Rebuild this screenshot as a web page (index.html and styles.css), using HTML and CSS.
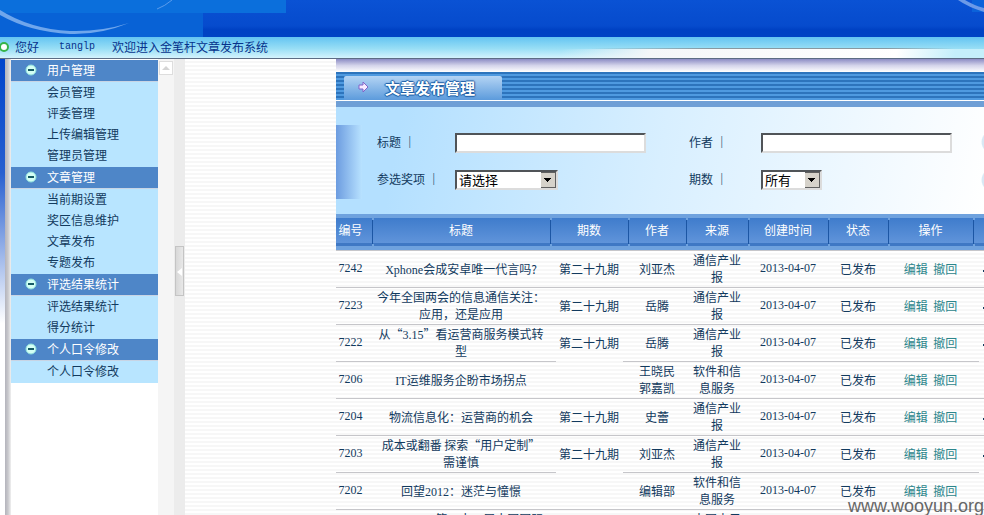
FILE: index.html
```html
<!DOCTYPE html>
<html lang="zh-CN">
<head>
<meta charset="utf-8">
<title>金笔杆文章发布系统</title>
<link rel="stylesheet" href="styles.css">
</head>
<body>
<header class="banner">
  <svg class="swoosh" width="286" height="37" viewBox="0 0 286 37" aria-hidden="true">
    <path fill="#0b6fdc" d="M0 0H286V13H0z"/>
    <path fill="#0862d6" d="M0 13H203V37H0z"/>
    <path fill="#6fa6ec" d="M0 10Q30 29 70 31Q100 32 129 23Q100 35 70 34Q30 32 0 15z"/>
    <path fill="none" stroke="#5b9cec" d="M157 9Q165 6 172 0"/>
  </svg>
  <svg class="swoosh-end" width="30" height="14" viewBox="0 0 30 14" aria-hidden="true">
    <path fill="#0b62da" d="M18 0H30V12H18z"/>
    <path fill="#6c9ae8" d="M4 0H11Q19 5 30 8V12Q14 7 4 0z"/>
  </svg>
</header>
<div class="greeting">
  <span class="ring"></span>
  <span>您好</span>
  <span class="user">tanglp</span>
  <span>欢迎进入金笔杆文章发布系统</span>
</div>
<div class="layout">
  <div class="edge"></div>
  <nav class="menu">
    <section>
      <h2><svg width="12" height="12" viewBox="0 0 12 12"><circle cx="6" cy="6" r="5"/><path d="M3 6H9"/></svg>用户管理</h2>
      <a href="#">会员管理</a><a href="#">评委管理</a><a href="#">上传编辑管理</a><a href="#">管理员管理</a>
    </section>
    <section>
      <h2><svg width="12" height="12" viewBox="0 0 12 12"><circle cx="6" cy="6" r="5"/><path d="M3 6H9"/></svg>文章管理</h2>
      <a href="#">当前期设置</a><a href="#">奖区信息维护</a><a href="#">文章发布</a><a href="#">专题发布</a>
    </section>
    <section>
      <h2><svg width="12" height="12" viewBox="0 0 12 12"><circle cx="6" cy="6" r="5"/><path d="M3 6H9"/></svg>评选结果统计</h2>
      <a href="#">评选结果统计</a><a href="#">得分统计</a>
    </section>
    <section>
      <h2><svg width="12" height="12" viewBox="0 0 12 12"><circle cx="6" cy="6" r="5"/><path d="M3 6H9"/></svg>个人口令修改</h2>
      <a href="#">个人口令修改</a>
    </section>
  </nav>
  <div class="track">
    <button class="scroll-up" aria-label="向上滚动"><svg width="14" height="14" viewBox="0 0 14 14"><path fill="#d4d4d4" d="M3 9L7 5L11 9z"/></svg></button>
  </div>
  <div class="splitter"><button class="handle" aria-label="收起菜单"><svg width="7" height="8" viewBox="0 0 7 8"><path fill="#fff" d="M6 0V8L1 4z"/></svg></button></div>
  <div class="blank"></div>
  <main class="content">
    <div class="shade"></div>
    <div class="titlebar">
      <h1><svg width="12" height="13" viewBox="0 0 12 13"><path fill="#f6eaff" stroke="#8062c8" d="M1 4H5V1L10 6L5 11V8H1z"/></svg>文章发布管理</h1>
    </div>
    <form class="search">
      <label for="title">标题 <b>｜</b></label><input id="title" type="text">
      <label for="author">作者 <b>｜</b></label><input id="author" type="text">
      <label for="award">参选奖项 <b>｜</b></label>
      <span class="pick"><select id="award" class="wide"><option>请选择</option></select></span>
      <label for="issue">期数 <b>｜</b></label>
      <span class="pick"><select id="issue"><option>所有</option></select></span>
    </form>
    <table>
      <colgroup><col class="c-id"><col class="c-title"><col class="c-issue"><col class="c-author"><col class="c-source"><col class="c-date"><col class="c-state"><col class="c-action"><col></colgroup>
      <thead>
        <tr><th>编号</th><th>标题</th><th>期数</th><th>作者</th><th>来源</th><th>创建时间</th><th>状态</th><th>操作</th><th></th></tr>
      </thead>
      <tbody>
        <tr><td>7242</td><td><span class="latin">Xphone</span>会成安卓唯一代言吗?</td><td>第二十九期</td><td>刘亚杰</td><td>通信产业报</td><td>2013-04-07</td><td>已发布</td><td><a href="#">编辑</a> <a href="#">撤回</a></td><td class="more"></td></tr>
        <tr><td>7223</td><td>今年全国两会的信息通信关注：应用，还是应用</td><td>第二十九期</td><td>岳腾</td><td>通信产业报</td><td>2013-04-07</td><td>已发布</td><td><a href="#">编辑</a> <a href="#">撤回</a></td><td class="more"></td></tr>
        <tr><td>7222</td><td>从“<span class="latin">3.15</span>”看运营商服务模式转型</td><td>第二十九期</td><td>岳腾</td><td>通信产业报</td><td>2013-04-07</td><td>已发布</td><td><a href="#">编辑</a> <a href="#">撤回</a></td><td class="more"></td></tr>
        <tr><td>7206</td><td><span class="latin">IT</span>运维服务企盼市场拐点</td><td class="empty"></td><td>王晓民<br>郭嘉凯</td><td>软件和信息服务</td><td>2013-04-07</td><td>已发布</td><td><a href="#">编辑</a> <a href="#">撤回</a></td><td class="empty"></td></tr>
        <tr><td>7204</td><td>物流信息化：运营商的机会</td><td>第二十九期</td><td>史蕾</td><td>通信产业报</td><td>2013-04-07</td><td>已发布</td><td><a href="#">编辑</a> <a href="#">撤回</a></td><td class="more"></td></tr>
        <tr><td>7203</td><td>成本或翻番 探索“用户定制”需谨慎</td><td>第二十九期</td><td>刘亚杰</td><td>通信产业报</td><td>2013-04-07</td><td>已发布</td><td><a href="#">编辑</a> <a href="#">撤回</a></td><td class="more"></td></tr>
        <tr><td>7202</td><td>回望<span class="latin">2012</span>：迷茫与憧憬</td><td class="empty"></td><td>编辑部</td><td>软件和信息服务</td><td>2013-04-07</td><td>已发布</td><td><a href="#">编辑</a> <a href="#">撤回</a></td><td class="empty"></td></tr>
        <tr><td></td><td><span class="latin">CCBN2013</span>第二十一届中国国际广播电视</td><td></td><td></td><td>中国电子报</td><td></td><td></td><td></td><td></td></tr>
      </tbody>
    </table>
  </main>
</div>
<div class="watermark">www.wooyun.org</div>
</body>
</html>
```
FILE: styles.css
```css
* { box-sizing: border-box; }
body {
  margin: 0;
  height: 100vh;
  display: flex;
  flex-direction: column;
  overflow: hidden;
  color: #123a5e;
  font: 12px/18px "Noto Sans CJK SC", sans-serif;
}
h1, h2 { margin: 0; }
a { text-decoration: none; }
button { padding: 0; border: 0; display: block; }

.banner {
  flex: none;
  height: 37px;
  display: flex;
  justify-content: space-between;
  background: linear-gradient(#0a52d4, #064bcd 70%, #0042c4 80%, #0044c4);
}
.greeting {
  flex: none;
  height: 22px;
  display: flex;
  align-items: center;
  padding-bottom: 2px;
  color: #06328c;
  border-bottom: 1px solid #5c6c84;
  background:
    linear-gradient(90deg, #8898a000 60%, #8898a0 72%, #8898a0 90%, #8898a000 97%) 0 11px / 100% 1px no-repeat,
    linear-gradient(100deg, #fff0 57%, #f4f6f8 66%, #fff 91%, #c4effb 97%) 0 12px / 100% 9px no-repeat,
    linear-gradient(#64c4f2, #98def5 55%, #d4f3fd);
}
.ring {
  width: 10px;
  height: 10px;
  margin: 0 6px 0 -1px;
  border: 2px solid #35b44a;
  border-radius: 50%;
  background: #fff;
}
.user {
  margin: 0 17px 0 20px;
  font-family: "Liberation Mono", monospace;
  font-size: 10px;
}

.layout { flex: 1; min-height: 0; display: flex; }
.layout > * { flex: none; }
.edge {
  width: 11px;
  background:
    linear-gradient(90deg, #b4b4bc, #c8c8cc 3px, #f0f0f0) right / 6px 100% no-repeat,
    linear-gradient(#0044cc, #2860d0 25%, #fff 58%);
}
.menu { width: 147px; padding-top: 1px; background: #fff; }
.menu section { padding-bottom: 1px; background: #b8e5ff; }
.menu h2 {
  height: 22px;
  display: flex;
  align-items: center;
  gap: 10px;
  padding: 0 0 2px 14px;
  border-bottom: 1px solid #c8d4e4;
  background: #4e86c8;
  color: #fff;
  font-size: 12px;
  font-weight: 400;
}
.menu h2 circle { fill: #d4fff4; stroke: #8ee0dc; }
.menu h2 path { stroke: #155b66; stroke-width: 2; }
.menu a { display: block; padding: 0 0 2px 36px; line-height: 19px; color: #123a5e; }
.track { width: 16px; background: #f5f5f5; }
.scroll-up { width: 14px; height: 14px; margin: 2px 1px; background: #fff; border: 1px solid #ddd; }
.scroll-up svg { display: block; margin: -1px; }
.splitter { width: 11px; display: flex; align-items: center; background: #ececec; }
.handle {
  width: 9px;
  height: 50px;
  margin: 0 1px 32px;
  border: 1px solid #c4c4c4;
  background: linear-gradient(90deg, #d8d8d8, #e8e8e8);
}
.blank { width: 151px; }
.blank, .content { background: repeating-linear-gradient(#fff 0 2px, #f7f7f7 2px 4px); }

.layout > .content { flex: 1; min-width: 0; overflow: hidden; }
.shade { height: 13px; background: linear-gradient(#8c8cc4, #d4d4ea 50%, #fff); }
.titlebar {
  height: 35px;
  padding: 4px 8px 0;
  background:
    linear-gradient(#fff, #fff) 0 28px / 100% 1px no-repeat,
    linear-gradient(#6f9fd6, #6f9fd6) 0 29px / 100% 6px no-repeat,
    repeating-linear-gradient(#2d74bc 0 2px, #4f9ae0 2px 4px);
}
h1 {
  width: 158px;
  height: 24px;
  display: flex;
  align-items: center;
  gap: 15px;
  padding: 0 0 1px 14px;
  border-radius: 2px 2px 0 0;
  background: linear-gradient(#b4d4f4, #5c9bdc);
  color: #fff;
  font-size: 15px;
  font-weight: 700;
  text-shadow: 1px 0 1px #1c5ca4, -1px 0 1px #1c5ca4, 0 1px 1px #1c5ca4, 0 -1px 1px #1c5ca4;
}
.search {
  height: 107px;
  display: grid;
  grid-template-columns: 78px 234px 72px 191px;
  grid-auto-rows: 20px;
  gap: 17px 0;
  align-items: center;
  padding: 26px 0 0 41px;
  background:
    radial-gradient(circle 12px at calc(100% + 9px) 35px, #d8e8f4 90%, #fff0),
    radial-gradient(circle 12px at calc(100% + 9px) 73px, #d8e8f4 90%, #fff0),
    linear-gradient(90deg, #6c9ce0, #b8e2ff) 0 18px / 26px 74px no-repeat,
    linear-gradient(100deg, #b4e0ff 10%, #d8efff 50%, #fff);
}
label { padding-bottom: 2px; }
input, select {
  height: 20px;
  margin: 0;
  border: 2px solid;
  border-color: #505458 #dcdcdc #dcdcdc #505458;
  border-radius: 0;
  background: #fff;
  color: #000;
  outline: 0;
}
input { width: 191px; }
select {
  width: 61px;
  appearance: none;
  padding: 0 2px;
  font: 13px/16px "Noto Sans CJK SC", sans-serif;
  background:
    linear-gradient(#000, #000) right 5px top 6px / 7px 1px no-repeat,
    linear-gradient(#000, #000) right 6px top 7px / 5px 1px no-repeat,
    linear-gradient(#000, #000) right 7px top 8px / 3px 1px no-repeat,
    linear-gradient(#000, #000) right 8px top 9px / 1px 1px no-repeat,
    linear-gradient(#d6d2ca, #d6d2ca) right 1px top 1px / 14px 14px no-repeat,
    linear-gradient(#606060, #606060) right / 15px 100% no-repeat,
    #fff;
}
.wide { width: 103px; }
.pick { display: flex; }

table { width: 100%; table-layout: fixed; border-collapse: separate; border-spacing: 0; text-align: center; }
.c-id { width: 36px; }
.c-title { width: 178px; }
.c-issue { width: 78px; }
.c-author { width: 58px; }
.c-source { width: 62px; }
.c-date { width: 80px; }
.c-state { width: 60px; }
.c-action { width: 85px; }
th {
  height: 36px;
  padding: 0 0 4px;
  color: #fff;
  font-weight: 400;
  background:
    linear-gradient(#6fa2de, #6fa2de) 0 4px / 2px 2px no-repeat,
    linear-gradient(#6fa2de, #6fa2de) 0 30px / 2px 3px no-repeat,
    linear-gradient(#1c56a4, #1c56a4) 0 4px / 1px 28px no-repeat,
    linear-gradient(#6fa2de 4px, #3f7ccc 4px, #6094da 29px, #3f78c4 29px 32px, #6fa2de 32px);
}
th:first-child {
  padding-right: 7px;
  white-space: nowrap;
  background: linear-gradient(#6fa2de 4px, #3f7ccc 4px, #6094da 29px, #3f78c4 29px 32px, #6fa2de 32px);
}
td { height: 37px; padding: 0 5px 2px; border-top: 1px solid #c6c6ca; line-height: 17px; }
td:first-child, td:nth-child(6), .latin { font-family: "Liberation Serif", serif; }
.latin { line-height: 1; }
td:first-child { padding: 0 7px 2px 0; }
td:nth-child(4), td:nth-child(6), td:nth-child(8) { padding: 0 0 2px; }
td a { color: #2c868c; }
td a + a { margin-left: 3px; }
td.empty {
  padding: 0;
  border-top: 0;
  background:
    linear-gradient(#c6c6ca, #c6c6ca) 0 0 / 6px 1px no-repeat,
    linear-gradient(#c6c6ca, #c6c6ca) 100% 0 / 5px 1px no-repeat;
}
td.empty:last-child { background: linear-gradient(#c6c6ca, #c6c6ca) 0 0 / 6px 1px no-repeat; }
td.more { background: linear-gradient(#123a5e, #123a5e) right 19px / 1px 2px no-repeat; }

.watermark {
  position: absolute;
  right: 0;
  bottom: 0;
  color: #666;
  font: 18px/18px "Liberation Sans", sans-serif;
}
```
